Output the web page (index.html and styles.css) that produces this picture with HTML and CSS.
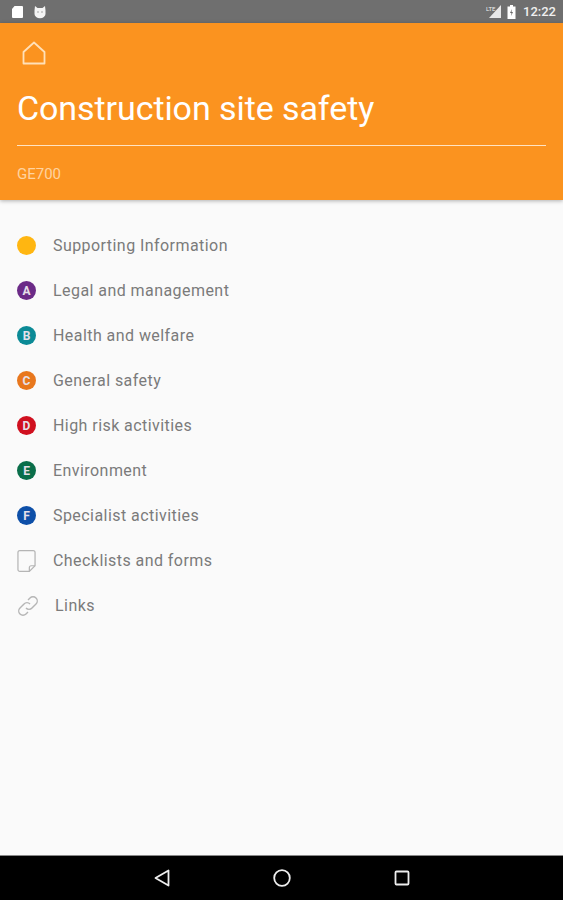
FILE: index.html
```html
<!DOCTYPE html>
<html lang="en">
<head>
  <meta charset="UTF-8">
  <title>Construction site safety</title>
  <link rel="stylesheet" href="styles.css">
</head>
<body>

  <div class="status-bar">
    <div class="status-left">
      <svg width="13" height="14" viewBox="0 0 13 14"><path d="M3.500 1H11a1 1 0 0 1 1 1v10a1 1 0 0 1-1 1H2a1 1 0 0 1-1-1V4z" fill="#fff"/></svg>
      <svg width="14" height="14" viewBox="0 0 14 14"><path d="M2 1l2.500 2h5L12 1l.5 4.500V9a5 3.800 0 0 1-11 0V5.500z" fill="#f4f4f4"/><circle cx="5" cy="7" r=".7" fill="#888"/><circle cx="9" cy="7" r=".7" fill="#888"/></svg>
    </div>
    <div class="status-right">
      <svg class="signal" width="17" height="15" viewBox="0 0 17 15"><path d="M16 1v13H4z" fill="#e8e8e8"/><path d="M0 0h9v6H0z" fill="#6f6f6f"/></svg>
      <span class="lte">LTE</span>
      <svg width="9" height="14" viewBox="0 0 9 14"><path d="M3 0h3v1.500h2.500V14H.5V1.500H3z" fill="#fff"/><path d="M5 4L3 8h1.500L4 11l2-4H4.500z" fill="#666"/></svg>
      <span class="clock">12:22</span>
    </div>
  </div>

  <header class="app-header">
    <svg class="home-icon" width="26" height="26" viewBox="0 0 26 26" fill="none"><path d="M2.500 12L13 2.500 23.500 12v11.500h-21z" stroke="#ffe0b8" stroke-width="1.800" stroke-linejoin="round"/></svg>
    <h1>Construction site safety</h1>
    <div class="header-rule"></div>
    <div class="code">GE700</div>
  </header>

  <main class="content">
    <ul class="menu">
      <li><span class="dot dot-info"></span>Supporting Information</li>
      <li><span class="dot dot-a">A</span>Legal and management</li>
      <li><span class="dot dot-b">B</span>Health and welfare</li>
      <li><span class="dot dot-c">C</span>General safety</li>
      <li><span class="dot dot-d">D</span>High risk activities</li>
      <li><span class="dot dot-e">E</span>Environment</li>
      <li><span class="dot dot-f">F</span>Specialist activities</li>
      <li>
        <svg class="item-icon" width="19" height="24" viewBox="0 0 20 24" fill="none"><path d="M3 1h14a2 2 0 0 1 2 2v14l-6 6H3a2 2 0 0 1-2-2V3a2 2 0 0 1 2-2z" stroke="#b5b5b5" stroke-width="1.300"/><path d="M19 17h-4a2 2 0 0 0-2 2v4" stroke="#b5b5b5" stroke-width="1.300"/></svg>
        Checklists and forms
      </li>
      <li class="link-item">
        <svg class="item-icon" width="22" height="22" viewBox="0 0 22 22" fill="none" stroke="#b5b5b5" stroke-width="1.400"><path d="M9 13a4 4 0 0 0 6 0l4-4a4 4 0 0 0-6-6l-2 2"/><path d="M13 9a4 4 0 0 0-6 0l-4 4a4 4 0 0 0 6 6l2-2"/></svg>
        Links
      </li>
    </ul>
  </main>

  <nav class="nav-bar">
    <svg width="16" height="18" viewBox="0 0 16 18" fill="none"><path d="M14.500 1.500v15L1.500 9z" stroke="#eee" stroke-width="1.800" stroke-linejoin="round"/></svg>
    <svg width="18" height="18" viewBox="0 0 18 18" fill="none"><circle cx="9" cy="9" r="7.800" stroke="#eee" stroke-width="1.800"/></svg>
    <svg width="16" height="16" viewBox="0 0 16 16" fill="none"><rect x="1.500" y="1.500" width="13" height="13" rx="1" stroke="#eee" stroke-width="1.800"/></svg>
  </nav>

</body>
</html>
```

FILE: styles.css
```css
html, body {
  height: 100%;
}

body {
  margin: 0;
  display: flex;
  flex-direction: column;
  height: 900px;
  overflow: hidden;
  font-family: 'Roboto', 'Liberation Sans', sans-serif;
  background-color: #fafafa;
}

.status-bar {
  height: 23px;
  flex: none;
  background-color: #6f6f6f;
  display: flex;
  justify-content: space-between;
  align-items: center;
  padding: 0 7px 0 11px;
  color: #f0f0f0;
}

.status-left {
  display: flex;
  align-items: center;
  gap: 9px;
}

.status-right {
  display: flex;
  align-items: center;
  position: relative;
}

.lte {
  position: absolute;
  left: 1px;
  top: 1px;
  font-size: 6px;
  color: #eee;
}

.status-right svg:nth-of-type(2) {
  margin-left: 5px;
}

.clock {
  font-size: 13px;
  margin-left: 7px;
  font-weight: 500;
}

.app-header {
  height: 177px;
  flex: none;
  box-sizing: border-box;
  background-color: #fb931f;
  padding: 17px 17px 0;
  box-shadow: 0 1px 4px rgba(0, 0, 0, 0.3);
  position: relative;
  z-index: 1;
}

.home-icon {
  display: block;
  margin-left: 4px;
}

.app-header h1 {
  margin: 21px 0 0;
  font-size: 34px;
  line-height: 42px;
  font-weight: 400;
  letter-spacing: -0.08px;
  color: #fff;
}

.header-rule {
  height: 1px;
  background-color: #ffe3c2;
  margin-top: 16px;
}

.code {
  margin-top: 20px;
  font-size: 15px;
  line-height: 16px;
  color: #ffd3a0;
}

.content {
  flex: 1;
  padding-top: 23px;
}

.menu {
  list-style: none;
  margin: 0;
  padding: 0 0 0 17px;
}

.menu li {
  height: 45px;
  display: flex;
  align-items: center;
  gap: 17px;
  font-size: 16px;
  letter-spacing: 0.44px;
  color: #7b7b7b;
}

.dot {
  width: 19px;
  height: 19px;
  border-radius: 50%;
  flex: none;
  display: flex;
  align-items: center;
  justify-content: center;
  font-size: 12px;
  font-weight: 700;
  letter-spacing: 0;
  color: #e6e0ea;
}

.dot-info { background-color: #ffb611; }
.dot-a { background-color: #6b2a87; }
.dot-b { background-color: #0b8a96; }
.dot-c { background-color: #e8771d; }
.dot-d { background-color: #d0101f; }
.dot-e { background-color: #0a6e4a; }
.dot-f { background-color: #0d4fa8; }

.item-icon {
  flex: none;
}

.menu .link-item {
  gap: 16px;
}

.nav-bar {
  height: 45px;
  flex: none;
  box-sizing: border-box;
  background-color: #000;
  border-top: 1px solid #888;
  display: flex;
  align-items: center;
  justify-content: center;
  gap: 103px;
}
```
